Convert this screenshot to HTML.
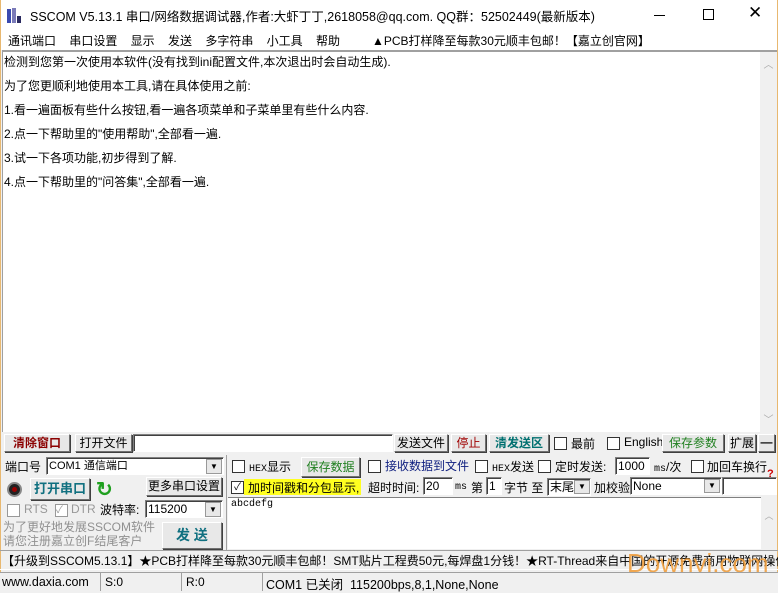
<!DOCTYPE html>
<html><head><meta charset="utf-8"><style>
*{margin:0;padding:0;box-sizing:border-box}
body{width:778px;height:593px;position:relative;overflow:hidden;background:#f0f0f0;font-family:"Liberation Sans","Noto Sans CJK SC","WenQuanYi Zen Hei",sans-serif;font-size:12px;color:#000}
.a{position:absolute;white-space:nowrap}
.btn{position:absolute;background:#e8e8e8;border:1px solid;border-color:#fff #707070 #707070 #fff;box-shadow:1px 1px 0 #404040;text-align:center;white-space:nowrap}
.inp{position:absolute;background:#fff;border:1px solid;border-color:#808080 #fff #fff #808080;box-shadow:inset 1px 1px 0 #404040;white-space:nowrap;overflow:hidden;padding-left:2px}
.cb{position:absolute;width:13px;height:13px;background:#fff;border:1px solid #333}
.dd{position:absolute;width:16px;background:#e8e8e8;border:1px solid #999;text-align:center;font-size:8px}
.m{font-family:"Liberation Mono",monospace;font-size:10px}
</style></head><body>
<!-- title -->
<div class="a" style="left:0;top:0;width:778px;height:31px;background:#fff"></div>
<div class="a" style="left:7px;top:8px;width:14px;height:15px">
<div class="a" style="left:0;top:1px;width:4px;height:14px;background:#3a4ab0"></div>
<div class="a" style="left:5px;top:0;width:4px;height:15px;background:#7a7ab8"></div>
<div class="a" style="left:10px;top:8px;width:4px;height:7px;background:#2a2a60"></div></div>
<div class="a" style="left:30px;top:6px;font-size:12.5px">SSCOM V5.13.1 串口/网络数据调试器,作者:大虾丁丁,2618058@qq.com. QQ群：52502449(最新版本)</div>
<div class="a" style="left:654px;top:15px;width:11px;height:1px;background:#000"></div>
<div class="a" style="left:703px;top:9px;width:11px;height:11px;border:1px solid #000"></div>
<div class="a" style="left:748px;top:3px;font-size:17px">✕</div>
<!-- menu -->
<div class="a" style="left:0;top:31px;width:778px;height:19px;background:#fff"></div>
<div class="a" style="left:8px;top:32px">通讯端口&nbsp;&nbsp;&nbsp;&nbsp;串口设置&nbsp;&nbsp;&nbsp;&nbsp;显示&nbsp;&nbsp;&nbsp;&nbsp;发送&nbsp;&nbsp;&nbsp;&nbsp;多字符串&nbsp;&nbsp;&nbsp;&nbsp;小工具&nbsp;&nbsp;&nbsp;&nbsp;帮助</div>
<div class="a" style="left:372px;top:32px">▲PCB打样降至每款30元顺丰包邮！【嘉立创官网】</div>
<!-- main text -->
<div class="a" style="left:2px;top:50px;width:775px;height:382px;background:#fff;border-top:2px solid #a0a0a0;border-left:1px solid #a0a0a0"></div>
<div class="a" style="left:760px;top:52px;width:17px;height:380px;background:#f0f0f0;color:#aaa;font-size:10px;text-align:center"><div style="margin-top:4px">︿</div><div style="margin-top:340px">﹀</div></div>
<div class="a" style="left:4px;top:50px;line-height:24px;font-size:12px">检测到您第一次使用本软件(没有找到ini配置文件,本次退出时会自动生成).<br>为了您更顺利地使用本工具,请在具体使用之前:<br>1.看一遍面板有些什么按钮,看一遍各项菜单和子菜单里有些什么内容.<br>2.点一下帮助里的"使用帮助",全部看一遍.<br>3.试一下各项功能,初步得到了解.<br>4.点一下帮助里的"问答集",全部看一遍.</div>
<div class="a" style="left:0;top:0;width:1px;height:593px;background:#e8b870"></div>
<div class="a" style="left:777px;top:0;width:1px;height:593px;background:#e8b870"></div>
<!-- toolbar row -->
<div class="btn" style="left:4px;top:434px;width:66px;height:18px;color:#8b0000;font-weight:bold;line-height:16px">清除窗口</div>
<div class="btn" style="left:75px;top:434px;width:57px;height:18px;line-height:16px">打开文件</div>
<div class="inp" style="left:133px;top:434px;width:260px;height:18px"></div>
<div class="btn" style="left:394px;top:434px;width:54px;height:18px;line-height:16px">发送文件</div>
<div class="btn" style="left:451px;top:434px;width:35px;height:18px;line-height:16px;color:#a00000">停止</div>
<div class="btn" style="left:489px;top:434px;width:60px;height:18px;line-height:16px;color:#007070;font-weight:bold">清发送区</div>
<div class="cb" style="left:554px;top:437px"></div><div class="a" style="left:571px;top:435px">最前</div>
<div class="cb" style="left:607px;top:437px"></div><div class="a" style="left:624px;top:435px">English</div>
<div class="btn" style="left:662px;top:434px;width:62px;height:18px;line-height:16px;color:#208020">保存参数</div>
<div class="btn" style="left:728px;top:434px;width:28px;height:18px;line-height:16px">扩展</div>
<div class="btn" style="left:758px;top:434px;width:17px;height:18px;line-height:14px;font-weight:bold">—</div>
<!-- left panel -->
<div class="a" style="left:5px;top:458px">端口号</div>
<div class="inp" style="left:46px;top:457px;width:178px;height:18px;line-height:16px;font-size:11px">COM1 通信端口</div>
<div class="dd" style="left:206px;top:459px;height:15px;line-height:13px">▼</div>
<div class="a" style="left:7px;top:482px;width:15px;height:15px;border-radius:50%;background:#222;border:2px solid #888"><div style="margin:3px;width:5px;height:5px;border-radius:50%;background:#900"></div></div>
<div class="btn" style="left:30px;top:478px;width:60px;height:22px;line-height:20px;font-weight:bold;color:#107080;font-size:13px">打开串口</div>
<div class="a" style="left:96px;top:477px;color:#20a020;font-size:20px;font-weight:bold">↻</div>
<div class="btn" style="left:146px;top:477px;width:76px;height:19px;line-height:17px">更多串口设置</div>
<div class="cb" style="left:7px;top:504px;border-color:#999"></div><div class="a" style="left:24px;top:502px;color:#999">RTS</div>
<div class="cb" style="left:55px;top:504px;border-color:#999;font-size:10px;line-height:11px;color:#999">✓</div><div class="a" style="left:71px;top:502px;color:#999">DTR</div>
<div class="a" style="left:100px;top:501px">波特率:</div>
<div class="inp" style="left:145px;top:500px;width:78px;height:18px;line-height:16px">115200</div>
<div class="dd" style="left:205px;top:502px;height:15px;line-height:13px">▼</div>
<div class="a" style="left:3px;top:520px;color:#909090;line-height:14px">为了更好地发展SSCOM软件<br>请您注册嘉立创F结尾客户</div>
<div class="btn" style="left:162px;top:522px;width:60px;height:27px;line-height:25px;font-weight:bold;color:#107080;font-size:14px">发 送</div>
<div class="a" style="left:226px;top:455px;width:1px;height:95px;background:#a0a0a0"></div>
<!-- right options -->
<div class="cb" style="left:232px;top:460px"></div><div class="a" style="left:249px;top:458px"><span class="m">HEX</span>显示</div>
<div class="btn" style="left:301px;top:457px;width:59px;height:20px;line-height:18px;color:#208020">保存数据</div>
<div class="cb" style="left:368px;top:460px"></div><div class="a" style="left:385px;top:457px;color:#102080">接收数据到文件</div>
<div class="cb" style="left:475px;top:460px"></div><div class="a" style="left:492px;top:458px"><span class="m">HEX</span>发送</div>
<div class="cb" style="left:538px;top:460px"></div><div class="a" style="left:555px;top:458px">定时发送:</div>
<div class="inp" style="left:615px;top:457px;width:35px;height:18px;line-height:16px">1000</div>
<div class="a" style="left:654px;top:458px"><span class="m">ms</span>/次</div>
<div class="cb" style="left:691px;top:460px"></div><div class="a" style="left:707px;top:458px">加回车换行</div>
<div class="a" style="left:767px;top:468px;color:#c00;font-weight:bold;font-size:11px">?</div>
<div class="a" style="left:244px;top:479px;width:117px;height:16px;background:#ffff20"></div>
<div class="cb" style="left:231px;top:481px;font-size:10px;line-height:11px;text-align:center">✓</div><div class="a" style="left:248px;top:479px">加时间戳和分包显示,</div>
<div class="a" style="left:368px;top:479px">超时时间:</div>
<div class="inp" style="left:423px;top:477px;width:30px;height:18px;line-height:16px">20</div>
<div class="a m" style="left:455px;top:482px">ms</div>
<div class="a" style="left:471px;top:479px">第</div>
<div class="inp" style="left:486px;top:477px;width:16px;height:18px;line-height:16px">1</div>
<div class="a" style="left:504px;top:479px">字节 至</div>
<div class="inp" style="left:547px;top:478px;width:44px;height:18px;line-height:16px">末尾</div>
<div class="dd" style="left:574px;top:480px;height:14px;line-height:12px">▼</div>
<div class="a" style="left:594px;top:479px">加校验</div>
<div class="inp" style="left:630px;top:477px;width:92px;height:18px;line-height:16px">None</div>
<div class="dd" style="left:704px;top:479px;height:14px;line-height:12px">▼</div>
<div class="inp" style="left:722px;top:477px;width:55px;height:18px"></div>
<div class="a" style="left:228px;top:497px;width:533px;height:52px;background:#fff;border-top:1px solid #808080"></div>
<div class="a" style="left:761px;top:497px;width:16px;height:52px;background:#f0f0f0;color:#aaa;font-size:9px;text-align:center;line-height:38px">︿</div>
<div class="a m" style="left:231px;top:499px">abcdefg</div>
<!-- ticker -->
<div class="a" style="left:0;top:550px;width:778px;height:20px;border-top:1px solid #a0a0a0;border-bottom:1px solid #fff"></div>
<div class="a" style="left:2px;top:552px;font-size:12px">【升级到SSCOM5.13.1】★PCB打样降至每款30元顺丰包邮！SMT贴片工程费50元,每焊盘1分钱！★RT-Thread来自中国的开源免费商用物联网操作系统</div>
<div class="a" style="left:627px;top:548px;font-size:26px;color:#f0a040;opacity:.9">Downyi.com</div>
<!-- status -->
<div class="a" style="left:0;top:572px;width:778px;height:21px;background:#f0f0f0;border-top:1px solid #a0a0a0"></div>
<div class="a" style="left:2px;top:575px;font-size:12.5px">www.daxia.com</div>
<div class="a" style="left:100px;top:573px;width:1px;height:18px;background:#a0a0a0"></div>
<div class="a" style="left:105px;top:575px">S:0</div>
<div class="a" style="left:181px;top:573px;width:1px;height:18px;background:#a0a0a0"></div>
<div class="a" style="left:186px;top:575px">R:0</div>
<div class="a" style="left:262px;top:573px;width:1px;height:18px;background:#a0a0a0"></div>
<div class="a" style="left:266px;top:574px;font-size:12.5px">COM1 已关闭&nbsp;&nbsp;115200bps,8,1,None,None</div>
</body></html>
